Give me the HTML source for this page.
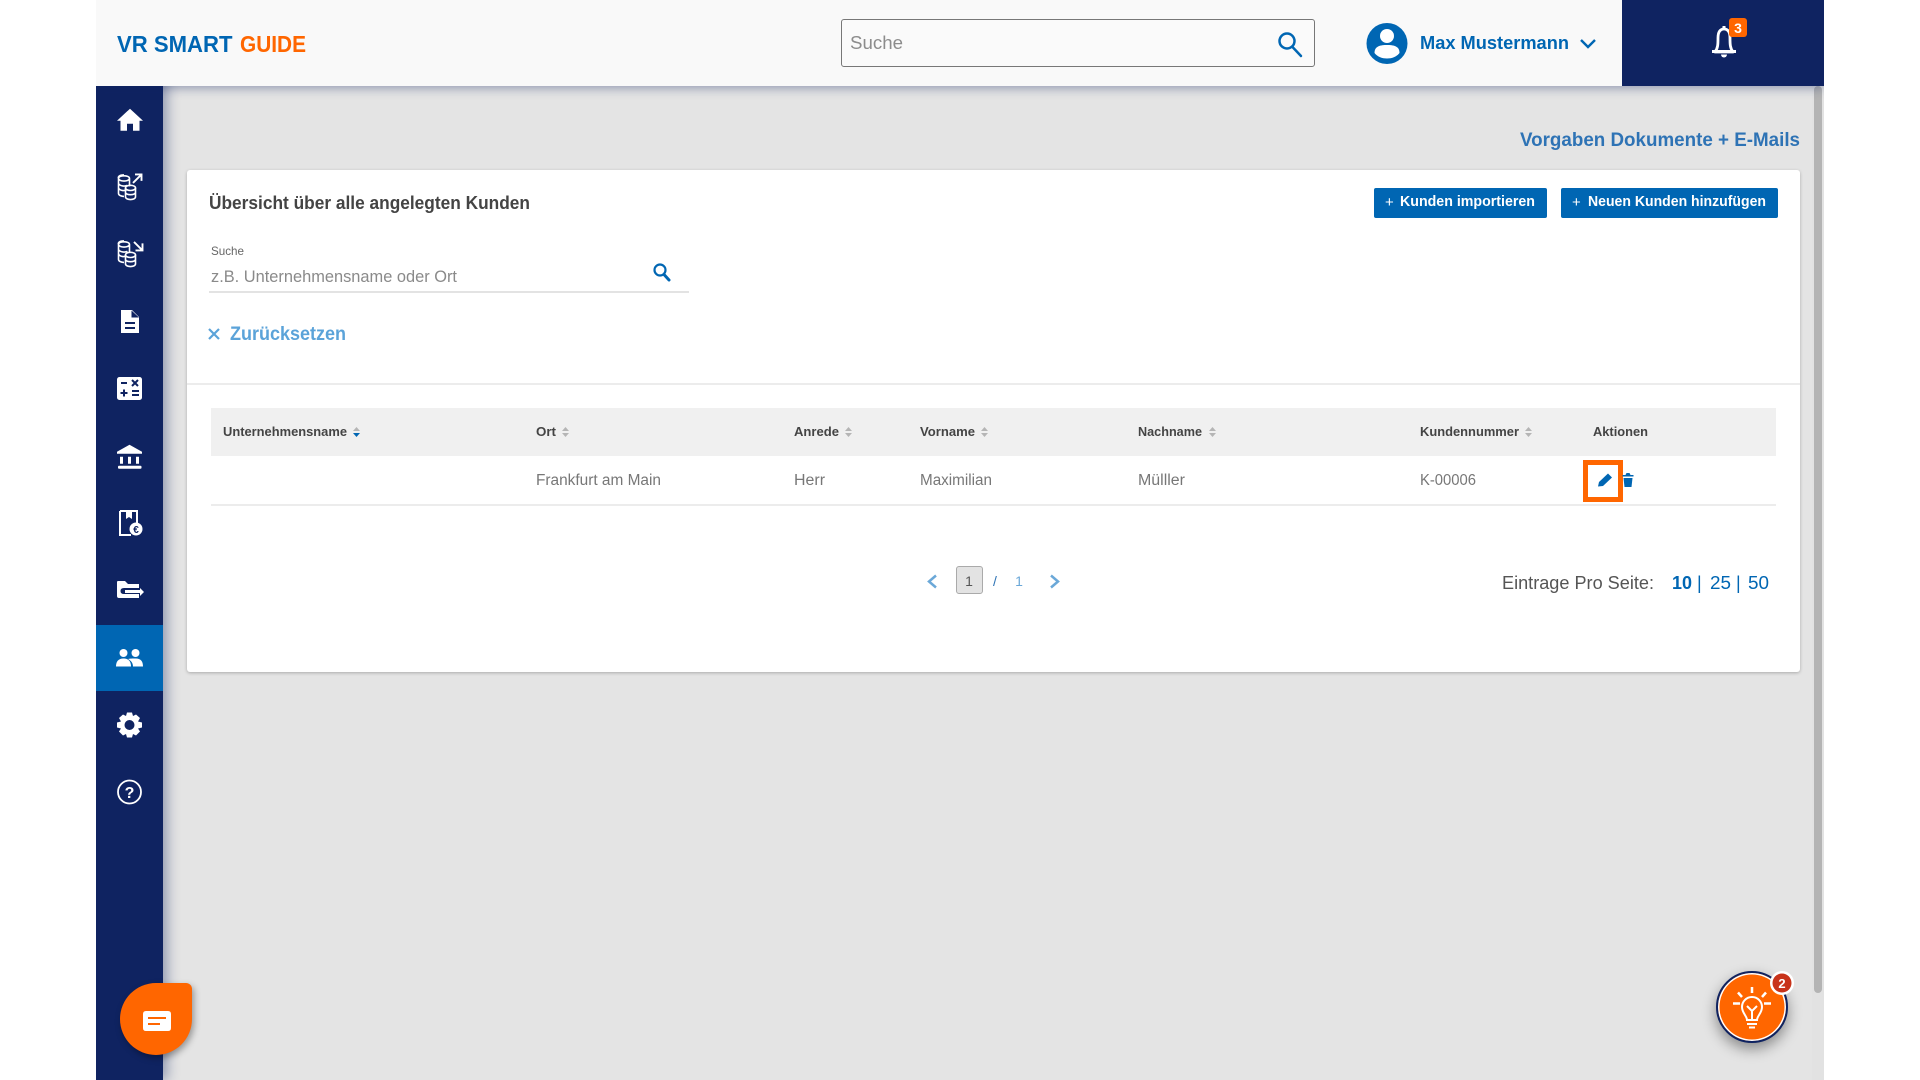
<!DOCTYPE html>
<html lang="de"><head><meta charset="utf-8"><title>VR Smart Guide</title>
<style>
html,body{margin:0;padding:0;width:1920px;height:1080px;overflow:hidden;background:#fff}
#p{position:absolute;left:0;top:0;width:1920px;height:1080px;filter:blur(.35px)}
#c{position:absolute;left:96px;top:0;width:1728px;height:1080px;overflow:hidden}
.b{position:absolute;box-sizing:border-box}
svg{position:absolute;left:0;top:0}
text{font-family:"Liberation Sans",sans-serif}
</style></head><body><div id="p">
<div id="c">
<div class="b" style="left:0;top:0;width:1728px;height:1080px;background:#e4e4e4"></div>
<div class="b" style="left:1716px;top:86px;width:12px;height:994px;background:#e2e2e2"></div>
<div class="b" style="left:1718px;top:86px;width:8px;height:907px;background:#b4b4b4;border-radius:4px"></div>
<div class="b" style="left:0;top:0;width:67px;height:1080px;background:#0f2361;box-shadow:4px 0 12px rgba(15,35,97,.4)"></div>
<div class="b" style="left:0;top:0;width:1728px;height:86px;background:#f9f9f9;box-shadow:0 2px 10px rgba(15,35,97,.4)"></div>
<div class="b" style="left:1525.500px;top:0;width:202.500px;height:86px;background:#0f2361"></div>
</div>
<div class="b" style="left:841px;top:19px;width:474px;height:48px;border:1.5px solid #777;border-radius:3px;background:#fafafa"></div>
<div class="b" style="left:96px;top:624.500px;width:67px;height:66px;background:#0066b3"></div>
<div class="b" style="left:187px;top:170px;width:1613px;height:502px;background:#fff;border-radius:3px;box-shadow:0 1px 3px rgba(0,0,0,.25)"></div>
<div class="b" style="left:187px;top:383px;width:1613px;height:1.5px;background:#ececec"></div>
<div class="b" style="left:209px;top:291px;width:480px;height:1.5px;background:#e3e3e3"></div>
<div class="b" style="left:211px;top:408px;width:1565px;height:48px;background:#f0f0f0"></div>
<div class="b" style="left:211px;top:504px;width:1565px;height:1.5px;background:#ececec"></div>
<div class="b" style="left:1374px;top:188px;width:173px;height:30px;background:#0066b3;border-radius:2px"></div>
<div class="b" style="left:1561px;top:188px;width:217px;height:30px;background:#0066b3;border-radius:2px"></div>
<div class="b" style="left:1583px;top:460px;width:40px;height:42px;border:5px solid #ff6600;background:#fff"></div>
<div class="b" style="left:956px;top:566px;width:27px;height:28px;background:#e3e3e3;border:1.5px solid #aaa;border-radius:3px"></div>
<div class="b" style="left:120px;top:983px;width:72px;height:72px;background:#ff6600;border-radius:36px 6px 36px 36px;box-shadow:2px 3px 7px rgba(0,0,0,.35)"></div>
<div class="b" style="left:1716px;top:971px;width:72px;height:72px;background:#ff6600;border-radius:50%;border:2px solid #0f2361;box-shadow:inset 0 0 0 1.5px #fff,0 6px 14px rgba(0,0,0,.4)"></div>
<svg width="1920" height="1080" viewBox="0 0 1920 1080">
<!-- logo -->
<text x="117" y="52" font-size="23" font-weight="700" fill="#0066b3" textLength="115.500" lengthAdjust="spacingAndGlyphs">VR SMART</text>
<text x="240" y="52" font-size="23" font-weight="700" fill="#ff6600" textLength="66" lengthAdjust="spacingAndGlyphs">GUIDE</text>
<!-- header -->
<text x="850" y="49" font-size="18" fill="#8c8c8c" textLength="53" lengthAdjust="spacingAndGlyphs">Suche</text>
<g fill="none" stroke="#0066b3" stroke-width="2.500"><circle cx="1287" cy="41" r="7.500"/><path d="M1292.500 47 L1301 56" stroke-linecap="round"/></g>
<circle cx="1387" cy="43.500" r="20.500" fill="#0066b3"/>
<circle cx="1387" cy="36" r="7" fill="#fff"/>
<path d="M1374.500 53 C1374.500 46 1380.500 45 1387 45 C1393.500 45 1399.500 46 1399.500 53 C1396.500 57 1391.500 58.500 1387 58.500 C1382.500 58.500 1377.500 57 1374.500 53Z" fill="#fff"/>
<text x="1420" y="49" font-size="18" font-weight="700" fill="#0066b3" textLength="149" lengthAdjust="spacingAndGlyphs">Max Mustermann</text>
<path d="M1581 40 L1588 47 L1595 40" fill="none" stroke="#0066b3" stroke-width="2.400"/>
<path d="M1715 52 C1718 48 1718 44 1718 38 C1718 32 1720 29 1724 29 C1728 29 1730 32 1730 38 C1730 44 1730 48 1733 52 Z" fill="none" stroke="#fff" stroke-width="2.800" stroke-linejoin="round"/>
<rect x="1712" y="50" width="24" height="3" fill="#fff"/>
<path d="M1721 54.500 h6 a3 3 0 0 1 -6 0Z" fill="#fff"/><rect x="1722.500" y="26" width="3" height="4" fill="#fff"/>
<rect x="1729" y="18" width="18" height="19" rx="3" fill="#ff6600"/>
<text x="1738" y="33" font-size="14" font-weight="700" fill="#fff" text-anchor="middle">3</text>
<!-- nav -->
<g fill="#fff">
<path transform="translate(0 3.700)" d="M130 105 L143 117 L139.500 117 L139.500 127 L133 127 L133 120 L127 120 L127 127 L120.500 127 L120.500 117 L117 117Z"/>
<path transform="translate(0 10)" d="M121 300 H132 L139 307 V323 H121Z M131.500 300.500 V307.500 H139Z M125 312 H135 V314 H125Z M125 317 H135 V319 H125Z" fill-rule="evenodd"/>
<rect x="117" y="377" width="25" height="23" rx="2.500"/>
<g transform="translate(0 14.700)">
<path d="M129.500 430 L142 437 V439 H117 V437Z"/>
<path d="M120 442 h3 v7 h-3z M128 442 h3 v7 h-3z M136 442 h3 v7 h-3z"/><rect x="118" y="451" width="23.500" height="3" rx="1"/>
</g>
<g transform="translate(0 1)">
<path d="M117 581 Q117 580 118 580 H125 L128 583 H139 V587 H124 Q120.500 587 120.500 590 Q120.500 593 124 593 H139 V597 H119 Q117 597 117 595Z"/>
<path d="M125 589 H140 V587 L144 591 L140 595 V592 H125Z"/>
</g>
<g transform="translate(0 4)">
<circle cx="123.500" cy="649" r="4"/><circle cx="135.500" cy="649" r="4"/>
<path d="M116 662.500 C116 656 120 654.500 123.500 654.500 C127 654.500 131 656 131 662.500Z"/>
<path d="M128 655 C130 654.500 132 654.500 135.500 654.500 C139.500 654.500 143 656 143 662.500 H133 C133 659 131 656.500 128 655Z"/>
</g>
<path transform="translate(0 5.500)" fill-rule="evenodd" d="M127 707 H132 L133 710.500 L136 709 L140 712.500 L138 716 L142 717 V722 L138 723 L140 726 L136 730 L133 728.500 L132 732 H127 L126 728.500 L123 730 L119 726 L121 723 L117 722 V717 L121 716 L119 712.500 L123 709 L126 710.500Z M129.500 714.500 A5 5 0 1 0 129.500 724.500 A5 5 0 1 0 129.500 714.500Z"/>
</g>
<g fill="none" stroke="#fff" stroke-width="1.600">
<g transform="translate(0 4.900)">
<path d="M124 170 c-7 0 -5.500 3.500 -5.500 3.500 v15 c0 2 3 3 5.500 3 M118.500 173.500 c0 3.500 11 3.500 11 0 c0 -3.500 -11 -3.500 -11 0 M118.500 178.500 c1 3 7 3 9 2 M118.500 183 c1 3 6 3 8 2 M129.500 173.500 v8"/>
<ellipse cx="130.500" cy="183" rx="5" ry="2.600"/><path d="M125.500 183 v9 c0 3.500 10 3.500 10 0 v-9 M125.500 187.500 c0 3 10 3 10 0"/>
<path d="M133 178 L141 170 M135 169.500 H141.500 V176" stroke-width="1.900"/>
</g>
<g transform="translate(0 4.900)">
<path d="M124 236 c-7 0 -5.500 3.500 -5.500 3.500 v15 c0 2 3 3 5.500 3 M118.500 239.500 c0 3.500 11 3.500 11 0 c0 -3.500 -11 -3.500 -11 0 M118.500 244.500 c1 3 7 3 9 2 M118.500 249 c1 3 6 3 8 2 M129.500 239.500 v8"/>
<ellipse cx="130.500" cy="250" rx="5" ry="2.600"/><path d="M125.500 250 v9 c0 3.500 10 3.500 10 0 v-9 M125.500 254.500 c0 3 10 3 10 0"/>
<path d="M134 237 L142 245 M142.500 238.500 V245.500 H135.500" stroke-width="1.900"/>
</g>
<g transform="translate(0 16)">
<path d="M120 495 H137 V509 M120 495 V519 H131" stroke-width="2"/>
<path d="M126 495 V503 L129 501 L132 503 V495" fill="#fff" stroke="none"/>
</g>
<circle cx="129.500" cy="792" r="11.500" stroke-width="1.800"/>
</g>
<circle cx="136" cy="529" r="6.500" fill="#fff"/>
<text x="136" y="533" font-size="10" font-weight="700" fill="#0f2361" text-anchor="middle">€</text>
<text x="129.500" y="798" font-size="16" font-weight="700" fill="#fff" text-anchor="middle">?</text>
<g transform="translate(0 12)" stroke="#0f2361" stroke-width="2"><path d="M121 371 H127 M120.500 381 H127.500 M124 377.500 V384.500 M132 368 L138 374 M138 368 L132 374 M132 379 H139 M132 383 H139" fill="none"/></g>
<!-- card -->
<text x="209" y="209" font-size="18" font-weight="700" fill="#444" textLength="321" lengthAdjust="spacingAndGlyphs">Übersicht über alle angelegten Kunden</text>
<text x="211" y="255" font-size="12" fill="#666" textLength="33" lengthAdjust="spacingAndGlyphs">Suche</text>
<text x="211" y="282" font-size="17" fill="#8a8a8a" textLength="246" lengthAdjust="spacingAndGlyphs">z.B. Unternehmensname oder Ort</text>
<g fill="none" stroke="#0066b3"><circle cx="660" cy="270" r="5.500" stroke-width="2.200"/><path d="M664 274.500 L669 280" stroke-width="3" stroke-linecap="round"/></g>
<path d="M209 329 L219 339 M219 329 L209 339" stroke="#5ba3d9" stroke-width="2.200"/>
<text x="230" y="340" font-size="19" font-weight="700" fill="#5ba3d9" textLength="116" lengthAdjust="spacingAndGlyphs">Zurücksetzen</text>
<text x="1520" y="146" font-size="19" font-weight="700" fill="#2e73b5" textLength="280" lengthAdjust="spacingAndGlyphs">Vorgaben Dokumente + E-Mails</text>
<text x="1385" y="207" font-size="15" font-weight="400" fill="#fff">+</text>
<text x="1400" y="206" font-size="14.500" font-weight="700" fill="#fff" textLength="135" lengthAdjust="spacingAndGlyphs">Kunden importieren</text>
<text x="1572" y="207" font-size="15" font-weight="400" fill="#fff">+</text>
<text x="1588" y="206" font-size="14.500" font-weight="700" fill="#fff" textLength="178" lengthAdjust="spacingAndGlyphs">Neuen Kunden hinzufügen</text>
<!-- table -->
<g font-size="13" font-weight="700" fill="#444">
<text x="223" y="436" textLength="124" lengthAdjust="spacingAndGlyphs">Unternehmensname</text>
<text x="536" y="436" textLength="20" lengthAdjust="spacingAndGlyphs">Ort</text>
<text x="794" y="436" textLength="45" lengthAdjust="spacingAndGlyphs">Anrede</text>
<text x="920" y="436" textLength="55" lengthAdjust="spacingAndGlyphs">Vorname</text>
<text x="1138" y="436" textLength="64" lengthAdjust="spacingAndGlyphs">Nachname</text>
<text x="1420" y="436" textLength="99" lengthAdjust="spacingAndGlyphs">Kundennummer</text>
<text x="1593" y="436" textLength="55" lengthAdjust="spacingAndGlyphs">Aktionen</text>
</g>
<g fill="#b5b5b5">
<path d="M353 431 h7 l-3.500 -4z"/><path d="M353 433 h7 l-3.500 4z" fill="#0066b3"/>
<path d="M562 431 h7 l-3.500 -4z M562 433 h7 l-3.500 4z"/>
<path d="M845 431 h7 l-3.500 -4z M845 433 h7 l-3.500 4z"/>
<path d="M981 431 h7 l-3.500 -4z M981 433 h7 l-3.500 4z"/>
<path d="M1209 431 h7 l-3.500 -4z M1209 433 h7 l-3.500 4z"/>
<path d="M1525 431 h7 l-3.500 -4z M1525 433 h7 l-3.500 4z"/>
</g>
<g font-size="15.500" fill="#777">
<text x="536" y="485" textLength="125" lengthAdjust="spacingAndGlyphs">Frankfurt am Main</text>
<text x="794" y="485" textLength="31" lengthAdjust="spacingAndGlyphs">Herr</text>
<text x="920" y="485" textLength="72" lengthAdjust="spacingAndGlyphs">Maximilian</text>
<text x="1138" y="485" textLength="47" lengthAdjust="spacingAndGlyphs">Mülller</text>
<text x="1420" y="485" textLength="56" lengthAdjust="spacingAndGlyphs">K-00006</text>
</g>
<path d="M1598 486.500 L1599 482 L1608 473.500 L1612 477.500 L1603 486 Z" fill="#0066b3"/>
<path d="M1622.500 476.500 H1633.500 V475 H1630.500 L1629.500 473 H1626.500 L1625.500 475 H1622.500Z M1623.500 478 H1632.500 L1631.500 487 H1624.500Z" fill="#0066b3"/>
<!-- pagination -->
<path d="M936 575.500 L929 581.500 L936 587.500 M1051 575.500 L1058 581.500 L1051 587.500" fill="none" stroke="#6ba8d8" stroke-width="2.500"/>
<text x="969" y="586" font-size="14" fill="#555" text-anchor="middle">1</text>
<text x="995" y="586" font-size="14" fill="#2e73b5" text-anchor="middle">/</text>
<text x="1019" y="586" font-size="14" fill="#6ba8d8" text-anchor="middle">1</text>
<text x="1502" y="589" font-size="18" fill="#555" textLength="152" lengthAdjust="spacingAndGlyphs">Eintrage Pro Seite:</text>
<text x="1672" y="589" font-size="18" font-weight="700" fill="#0066b3" textLength="20" lengthAdjust="spacingAndGlyphs">10</text>
<text x="1697" y="589" font-size="18" fill="#0066b3">|</text>
<text x="1710" y="589" font-size="18" fill="#0066b3" textLength="21" lengthAdjust="spacingAndGlyphs">25</text>
<text x="1736" y="589" font-size="18" fill="#0066b3">|</text>
<text x="1748" y="589" font-size="18" fill="#0066b3" textLength="21" lengthAdjust="spacingAndGlyphs">50</text>
<!-- chat -->
<g transform="translate(0 16)">
<path d="M146 995 H168 Q171 995 171 998 V1012 Q171 1015 168 1015 H146 Q143 1015 143 1012 V998 Q143 995 146 995Z" fill="#fff"/>
<path d="M148 1002 H166 M148 1008 H160" stroke="#ff6600" stroke-width="2"/>
</g>
<!-- tips -->
<g fill="none" stroke="#fff" stroke-width="2">
<path d="M1747 1020 C1747 1016 1742 1013 1742 1007 A10 10 0 0 1 1762 1007 C1762 1013 1757 1016 1757 1020Z"/>
<path d="M1752 1020 V1011 M1747 1006 L1752 1011 L1757 1006 M1747 1024 H1757 M1749 1027.500 H1755"/>
<path d="M1752 987 V993 M1738 992.500 L1742 997 M1766 992.500 L1762 997 M1733 1003.500 H1740 M1764 1003.500 H1771" stroke-width="2.500"/>
</g>
<circle cx="1782" cy="983" r="12" fill="#fff"/><circle cx="1782" cy="983" r="9.500" fill="#c8331a"/>
<text x="1782" y="988" font-size="13" font-weight="700" fill="#fff" text-anchor="middle">2</text>
</svg>
</div></body></html>
